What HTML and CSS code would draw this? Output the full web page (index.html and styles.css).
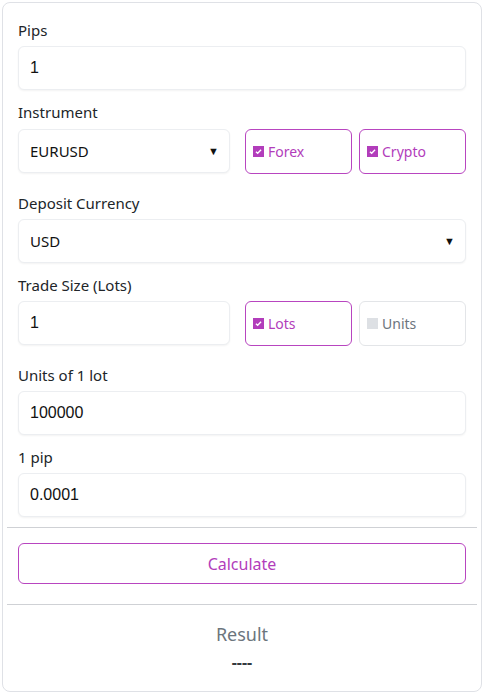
FILE: index.html
```html
<!DOCTYPE html>
<html lang="en">
<head>
  <meta charset="UTF-8">
  <meta name="viewport" content="width=device-width, initial-scale=1.0">
  <title>Pip Value Calculator</title>
  <link rel="stylesheet" href="styles.css">
</head>
<body>
  <div class="calc-card">
    <form id="pipForm">
      <div class="field">
        <label for="pips">Pips</label>
        <input type="text" id="pips" class="input" value="1">
      </div>

      <div class="field field-boxes field-first-row">
        <label for="instrument">Instrument</label>
        <div class="split-row">
          <div class="select-wrap">
            <select id="instrument" class="input select">
              <option>EURUSD</option>
            </select>
            <span class="caret">&#9660;</span>
          </div>
          <div class="box-group">
            <label class="check-box active">
              <span class="tick"><svg viewBox="0 0 12 12"><path d="M3.2 6.2l1.9 1.8 3.7-3.9" /></svg></span>Forex
            </label>
            <label class="check-box active">
              <span class="tick"><svg viewBox="0 0 12 12"><path d="M3.2 6.2l1.9 1.8 3.7-3.9" /></svg></span>Crypto
            </label>
          </div>
        </div>
      </div>

      <div class="field">
        <label for="currency">Deposit Currency</label>
        <div class="select-wrap">
          <select id="currency" class="input select">
            <option>USD</option>
          </select>
          <span class="caret">&#9660;</span>
        </div>
      </div>

      <div class="field field-boxes">
        <label for="size">Trade Size (Lots)</label>
        <div class="split-row">
          <input type="text" id="size" class="input" value="1">
          <div class="box-group">
            <label class="check-box active">
              <span class="tick"><svg viewBox="0 0 12 12"><path d="M3.2 6.2l1.9 1.8 3.7-3.9" /></svg></span>Lots
            </label>
            <label class="check-box">
              <span class="tick"></span>Units
            </label>
          </div>
        </div>
      </div>

      <div class="field">
        <label for="lotUnits">Units of 1 lot</label>
        <input type="text" id="lotUnits" class="input" value="100000">
      </div>

      <div class="field">
        <label for="pipSize">1 pip</label>
        <input type="text" id="pipSize" class="input" value="0.0001">
      </div>

      <hr class="divider">
      <button type="submit" class="btn">Calculate</button>
      <hr class="divider divider-low">

      <div class="result">
        <p class="result-title">Result</p>
        <p class="result-value">----</p>
      </div>
    </form>
  </div>
</body>
</html>
```

FILE: styles.css
```css
body {
  margin: 0;
  padding: 2px;
  background: #fff;
  font-family: 'Noto Sans', 'Open Sans', sans-serif;
  color: #212529;
}
.calc-card {
  border: 1px solid #dfe1e6;
  border-radius: 8px;
  padding: 15px 15px 0;
  height: 690px;
  box-sizing: border-box;
}
.field {
  display: flex;
  flex-direction: column;
  margin-bottom: 10px;
}
.field-boxes {
  margin-bottom: 17px;
}
.field > label {
  font-size: 15px;
  line-height: 24px;
  margin-bottom: 4px;
}
.field-first-row > label {
  margin-bottom: 5px;
}
.input {
  width: 100%;
  height: 44px;
  box-sizing: border-box;
  border: 1px solid #eceef1;
  border-radius: 6px;
  box-shadow: 0 1px 2px rgba(0, 0, 0, 0.05);
  padding: 0 11px;
  font-family: 'Liberation Sans', Arial, sans-serif;
  font-size: 16px;
  color: #111;
  background: #fff;
  outline: none;
}
.select-wrap {
  position: relative;
  width: 100%;
}
.select {
  appearance: none;
  -webkit-appearance: none;
  font-family: 'Noto Sans', 'Open Sans', sans-serif;
  font-size: 15px;
}
.caret {
  position: absolute;
  right: 11px;
  top: 14px;
  font-size: 11px;
  color: #111;
  pointer-events: none;
}
.split-row {
  display: flex;
  gap: 15px;
  align-items: flex-start;
}
.split-row > .select-wrap,
.split-row > .input {
  width: 212px;
  flex: none;
}
.box-group {
  flex: 1;
  display: flex;
  gap: 7px;
}
.check-box {
  flex: 1;
  height: 45px;
  box-sizing: border-box;
  display: flex;
  align-items: center;
  gap: 4px;
  padding-left: 7px;
  border: 1px solid #e3e5e8;
  border-radius: 6px;
  font-size: 14px;
  color: #6c757d;
  cursor: pointer;
}
.check-box.active {
  border-color: #b845c0;
  color: #b23dbb;
}
.tick {
  width: 11px;
  height: 11px;
  background: #dde0e4;
  display: inline-flex;
}
.check-box.active .tick {
  background: #b23dbb;
}
.tick svg {
  width: 11px;
  height: 11px;
  fill: none;
  stroke: #fff;
  stroke-width: 1.5;
}
.divider {
  border: none;
  border-top: 1px solid #cfd1d5;
  margin: 3px -11px 15px;
}
.divider-low {
  margin: 20px -11px 0;
}
.btn {
  display: block;
  width: 100%;
  height: 41px;
  background: #fff;
  border: 1px solid #b845c0;
  border-radius: 6px;
  color: #b23dbb;
  font-family: 'Noto Sans', 'Open Sans', sans-serif;
  font-size: 16px;
  cursor: pointer;
}
.result {
  text-align: center;
  padding-top: 16px;
}
.result-title {
  margin: 0;
  font-size: 18px;
  line-height: 26px;
  color: #6c757d;
}
.result-value {
  margin: 3px 0 0;
  font-size: 16px;
  font-weight: bold;
  line-height: 24px;
  color: #343a40;
}
```
